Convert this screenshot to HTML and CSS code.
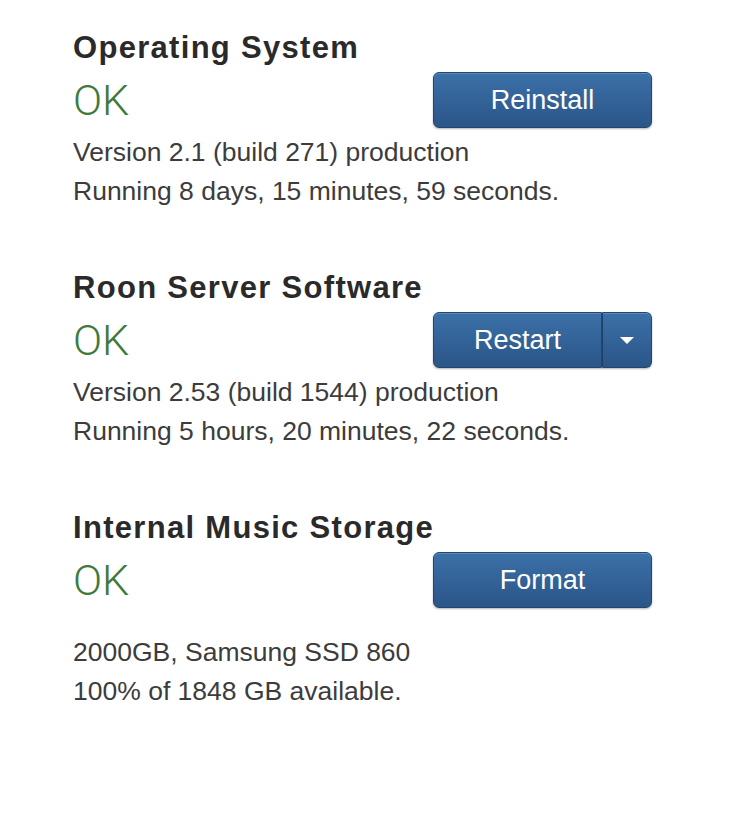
FILE: index.html
```html
<!DOCTYPE html>
<html>
<head>
<meta charset="utf-8">
<link rel="stylesheet" href="styles.css">
</head>
<body>
<main class="panel">
  <section class="section">
    <h2 class="title">Operating System</h2>
    <div class="status-row">
      <span class="ok">OK</span>
      <button class="btn">Reinstall</button>
    </div>
    <div class="details">
      <div>Version 2.1 (build 271) production</div>
      <div>Running 8 days, 15 minutes, 59 seconds.</div>
    </div>
  </section>
  <section class="section">
    <h2 class="title">Roon Server Software</h2>
    <div class="status-row">
      <span class="ok">OK</span>
      <div class="btn-group">
        <button class="btn btn-main">Restart</button>
        <button class="btn btn-caret"><span class="caret"></span></button>
      </div>
    </div>
    <div class="details">
      <div>Version 2.53 (build 1544) production</div>
      <div>Running 5 hours, 20 minutes, 22 seconds.</div>
    </div>
  </section>
  <section class="section">
    <h2 class="title">Internal Music Storage</h2>
    <div class="status-row">
      <span class="ok">OK</span>
      <button class="btn">Format</button>
    </div>
    <div class="details details-spaced">
      <div>2000GB, Samsung SSD 860</div>
      <div>100% of 1848 GB available.</div>
    </div>
  </section>
</main>
</body>
</html>
```

FILE: styles.css
```css
html, body {
  margin: 0;
  padding: 0;
  background: #ffffff;
}

body {
  font-family: "Liberation Sans", Arial, sans-serif;
  color: #333333;
}

.panel {
  display: flex;
  flex-direction: column;
  gap: 60px;
  width: 579px;
  margin-left: 73px;
  padding-top: 31px;
}

.section {
  display: flex;
  flex-direction: column;
}

.title {
  margin: 0;
  font-size: 31px;
  line-height: 34px;
  font-weight: bold;
  color: #2a2a2a;
  letter-spacing: 1.3px;
}

.status-row {
  display: flex;
  align-items: center;
  justify-content: space-between;
  margin-top: 7px;
  height: 56px;
}

.ok {
  font-family: Roboto, "Liberation Sans", sans-serif;
  font-weight: 300;
  font-size: 43px;
  line-height: 56px;
  color: #3f7a3c;
}

.btn {
  box-sizing: border-box;
  width: 219px;
  height: 56px;
  padding: 0;
  border: 1px solid #214670;
  border-radius: 6px;
  background: linear-gradient(#3b70a8, #2b5587);
  box-shadow: inset 0 1px 0 rgba(255, 255, 255, 0.18), 0 1px 2px rgba(0, 0, 0, 0.3);
  color: #ffffff;
  font-family: "Liberation Sans", Arial, sans-serif;
  font-size: 27px;
  line-height: 1;
  cursor: pointer;
}

.btn-group {
  display: flex;
  width: 219px;
  border-radius: 6px;
  box-shadow: 0 1px 2px rgba(0, 0, 0, 0.3);
}

.btn-group .btn {
  box-shadow: inset 0 1px 0 rgba(255, 255, 255, 0.18);
}

.btn-main {
  width: 169px;
  border-radius: 6px 0 0 6px;
}

.btn-caret {
  width: 50px;
  border-left: 1px solid #1f4168;
  border-radius: 0 6px 6px 0;
  display: flex;
  align-items: center;
  justify-content: center;
}

.caret {
  width: 0;
  height: 0;
  border-left: 7px solid transparent;
  border-right: 7px solid transparent;
  border-top: 7px solid #ffffff;
}

.details {
  margin-top: 5px;
  font-size: 26.5px;
  line-height: 39px;
  color: #3c3c3c;
}

.details-spaced {
  margin-top: 25px;
}
```
